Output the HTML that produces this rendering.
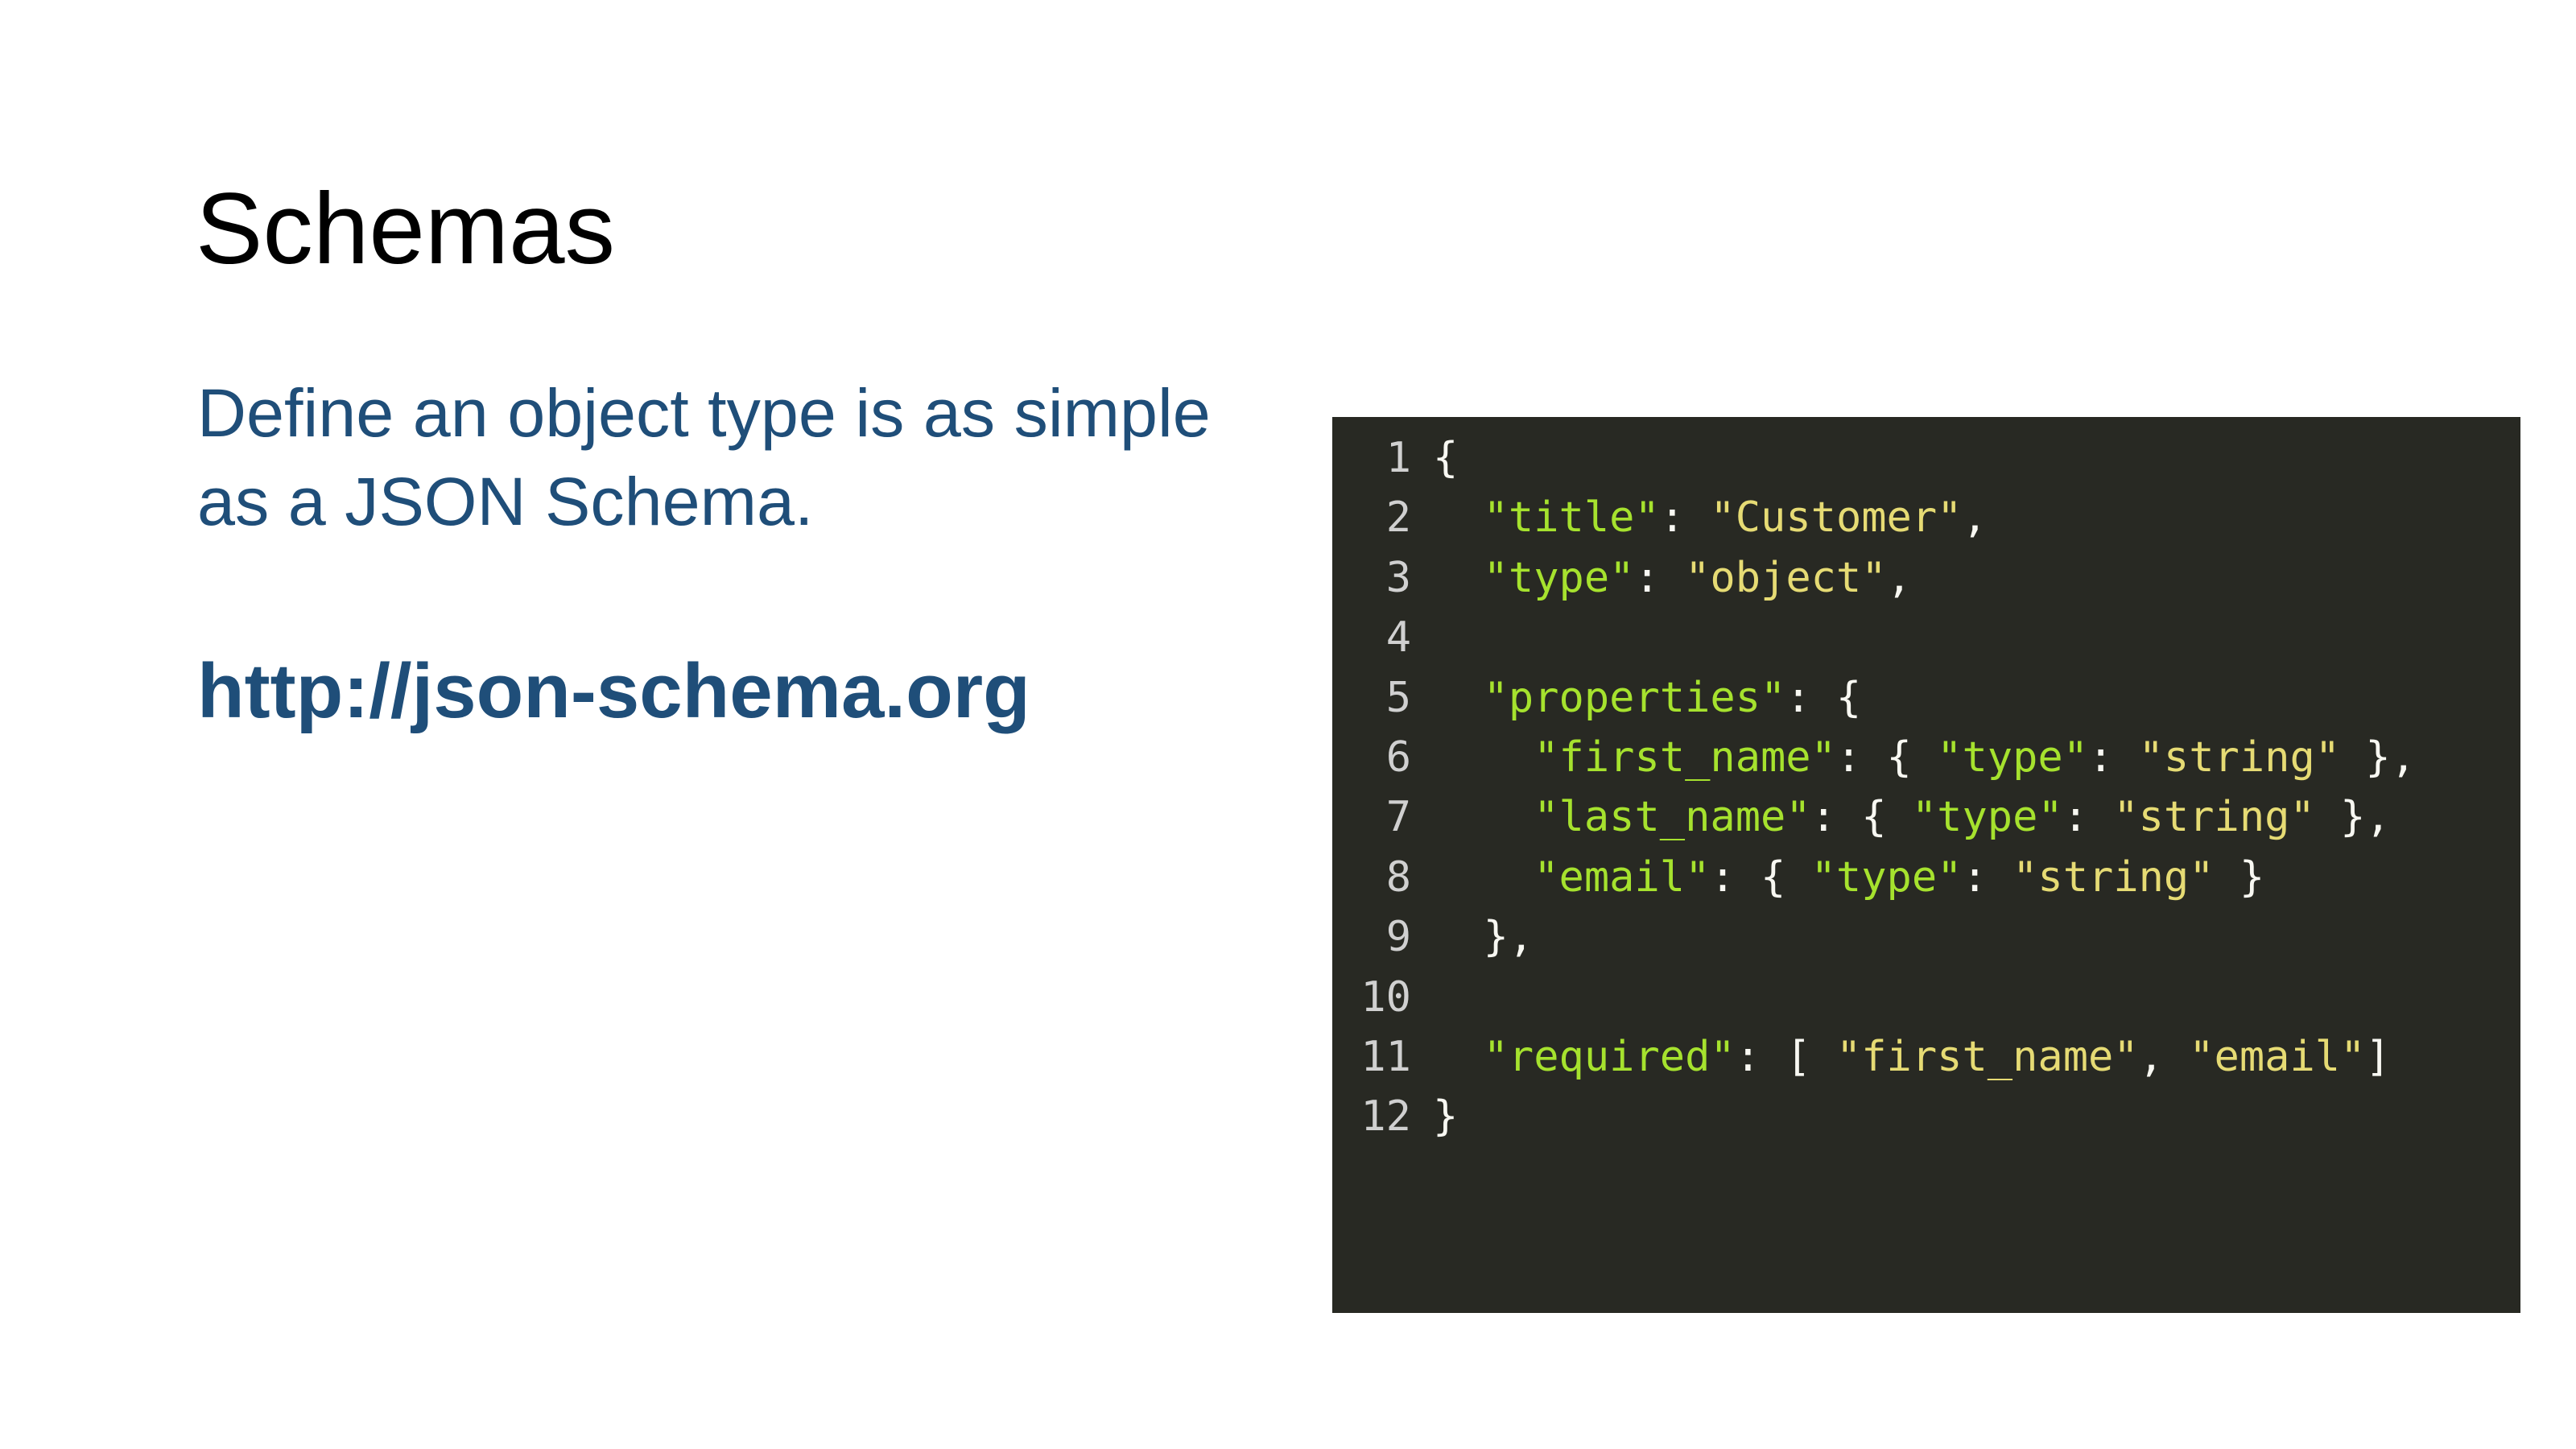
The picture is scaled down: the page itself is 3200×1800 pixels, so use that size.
<!DOCTYPE html>
<html><head><meta charset="utf-8"><style>
html,body{margin:0;padding:0;background:#fff;width:3200px;height:1800px;overflow:hidden;position:relative}
.t{position:absolute;left:243px;top:222px;font:125px "Liberation Sans",sans-serif;color:#000;line-height:1}
.b{position:absolute;left:245px;font:84.5px "Liberation Sans",sans-serif;color:#1f4e79;line-height:1;white-space:nowrap}
.l{position:absolute;left:245px;top:811px;font:bold 96px "Liberation Sans",sans-serif;color:#1f4e79;line-height:1;white-space:nowrap}
.code{position:absolute;left:1655px;top:518px;width:1476px;height:1113px;background:#282923}
pre{margin:0;position:absolute;top:14px;left:0;font:52px "DejaVu Sans Mono",monospace;line-height:74.4px;color:#f8f8f2}
.n{position:absolute;left:0;width:98px;text-align:right;color:#d0d0d0}
.c{position:absolute;left:125px}
.k{color:#a6e22e}.s{color:#e6db74}
</style></head><body>
<div class="t">Schemas</div>
<div class="b" style="top:471px">Define an object type is as simple</div>
<div class="b" style="top:581px">as a JSON Schema.</div>
<div class="l">http://json-schema.org</div>
<div class="code">
<pre class="n">1
2
3
4
5
6
7
8
9
10
11
12</pre>
<pre class="c">{
  <span class="k">"title"</span>: <span class="s">"Customer"</span>,
  <span class="k">"type"</span>: <span class="s">"object"</span>,

  <span class="k">"properties"</span>: {
    <span class="k">"first_name"</span>: { <span class="k">"type"</span>: <span class="s">"string"</span> },
    <span class="k">"last_name"</span>: { <span class="k">"type"</span>: <span class="s">"string"</span> },
    <span class="k">"email"</span>: { <span class="k">"type"</span>: <span class="s">"string"</span> }
  },

  <span class="k">"required"</span>: [ <span class="s">"first_name"</span>, <span class="s">"email"</span>]
}</pre>
</div>
</body></html>
